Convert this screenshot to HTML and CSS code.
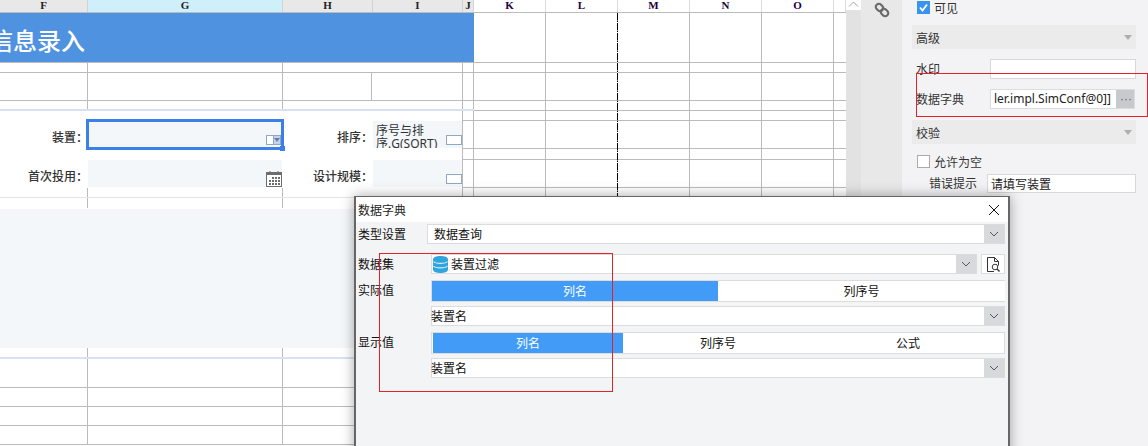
FILE: index.html
```html
<!DOCTYPE html>
<html lang="zh">
<head>
<meta charset="utf-8">
<title>数据字典</title>
<link rel="stylesheet" href="styles.css">
</head>
<body>
<div class="stage">
  <section class="sheet">
    <div class="col-head">
      <div class="ch w-f">F</div><div class="ch w-g active">G</div><div class="ch w-h">H</div><div class="ch w-i">I</div><div class="ch w-j">J</div>
      <div class="ch w-k plain">K</div><div class="ch w-k plain">L</div><div class="ch w-k plain">M</div><div class="ch w-k plain">N</div><div class="ch w-k plain">O</div><div class="ch w-p plain"></div>
    </div>
    <div class="panes">
      <div class="pane-left">
        <div class="banner"><span class="banner-text">信息录入</span></div>
        <div class="lrow h10"></div>
        <div class="lrow h28 with-i"></div>
        <div class="lrow h10 lavender"></div>
        <div class="form-block">
          <div class="form-main">
            <div class="form-row first">
              <div class="flabel">装置：</div>
              <div class="fcell">
                <div class="selection"><span class="handle"></span></div>
                <div class="combo-widget"><span class="cw-box"></span><span class="cw-arrow"></span></div>
              </div>
              <div class="flabel">排序：</div>
              <div class="fcell sort">序号与排<br>序.G(SORT)<span class="mini"></span></div>
            </div>
            <div class="form-row second">
              <div class="flabel">首次投用：</div>
              <div class="fcell">
                <svg class="calendar" width="16" height="16" viewBox="0 0 16 16">
                  <rect x="0.5" y="1.5" width="15" height="14" fill="#fff" stroke="#6c6c6c"/>
                  <rect x="0" y="1" width="16" height="3" fill="#6c6c6c"/>
                  <path d="M4 0v2M12 0v2" stroke="#6c6c6c"/>
                  <g fill="#6c6c6c"><rect x="6" y="6" width="2" height="2"/><rect x="9" y="6" width="2" height="2"/><rect x="12" y="6" width="2" height="2"/><rect x="3" y="9" width="2" height="2"/><rect x="6" y="9" width="2" height="2"/><rect x="9" y="9" width="2" height="2"/><rect x="12" y="9" width="2" height="2"/><rect x="3" y="12" width="2" height="2"/><rect x="6" y="12" width="2" height="2"/><rect x="9" y="12" width="2" height="2"/><rect x="12" y="12" width="2" height="2"/></g>
                </svg>
              </div>
              <div class="flabel">设计规模：</div>
              <div class="fcell sort"><span class="mini low"></span></div>
            </div>
          </div>
          <div class="j-strip"></div>
        </div>
        <div class="lrow h10 faint"></div>
        <div class="lrow h11 gap-white"></div>
        <div class="tinted"></div>
        <div class="lrow h11 lavender"></div>
        <div class="lrow h29"></div>
        <div class="lrow h19"></div>
        <div class="lrow h19"></div>
        <div class="lrow h19"></div>
      </div>
      <div class="pane-right">
        <div class="rrow r50"></div>
        <div class="rrow r10"></div>
        <div class="rrow r28"></div>
        <div class="rrow r10"></div>
        <div class="rrow r10"></div>
        <div class="rrow r28"></div>
        <div class="rrow r11"></div>
        <div class="rrow r28"></div>
        <div class="rrow r10"></div>
        <span class="page-break"></span>
      </div>
    </div>
  </section>

  <div class="scrollbar">
    <div class="scroll-up"><svg width="15" height="10" viewBox="0 0 15 10"><path d="M3 6.5l4.5-4.500 4.500 4.500" fill="none" stroke="#a8a8a8"/></svg></div>
    <div class="scroll-track"></div>
  </div>

  <div class="rail">
    <svg class="link-icon" width="16" height="16" viewBox="0 0 18 18">
      <g fill="none" stroke="#6a6a6a" stroke-width="2.400" transform="rotate(45 9 9)">
        <rect x="0.500" y="5.500" width="9" height="7" rx="3.500"/>
        <rect x="8.500" y="5.500" width="9" height="7" rx="3.500"/>
      </g>
    </svg>
  </div>

  <aside class="panel">
    <label class="check-row top"><span class="check on"><svg width="13" height="13" viewBox="0 0 13 13"><path d="M3 6.500l2.500 3 4.500-6" fill="none" stroke="#fff" stroke-width="1.800"/></svg></span>可见</label>
    <div class="section"><span>高级</span><i class="caret"></i></div>
    <div class="prop first-prop"><span class="prop-label">水印</span><div class="input"></div></div>
    <div class="prop second-prop"><span class="prop-label">数据字典</span><div class="input dict"><span class="dict-text">ler.impl.SimConf@0]]</span><span class="dots">···</span></div></div>
    <div class="section"><span>校验</span><i class="caret"></i></div>
    <label class="check-row allow"><span class="check"></span>允许为空</label>
    <div class="prop err"><span class="prop-label">错误提示</span><div class="input err-input">请填写装置</div></div>
  </aside>

  <div class="dialog">
    <header class="dlg-title"><span>数据字典</span>
      <svg width="12" height="12" viewBox="0 0 12 12"><path d="M1 1l10 10M11 1L1 11" stroke="#111" stroke-width="1"/></svg>
    </header>
    <div class="dlg-body">
      <div class="drow r-type">
        <span class="dlabel narrow">类型设置</span>
        <div class="dcombo pad"><span class="dtext">数据查询</span><span class="arrow"><svg width="10" height="6" viewBox="0 0 10 6"><path d="M1 1l4 4 4-4" fill="none" stroke="#555"/></svg></span></div>
      </div>
      <div class="drow r-set">
        <span class="dlabel">数据集</span>
        <div class="dcombo">
          <svg class="db" width="15" height="17" viewBox="0 0 15 17">
            <path d="M0 3.500C0 1 3.500 0 7.500 0S15 1 15 3.500v10c0 2.500-3.500 3.500-7.500 3.500S0 16 0 13.500z" fill="#2fa5e0"/>
            <path d="M0.500 5.500c2 2.500 12 2.500 14 0M0.500 10c2 2.500 12 2.500 14 0" fill="none" stroke="#d6effa" stroke-width="1.100"/>
          </svg>
          <span class="dtext tight">装置过滤</span><span class="arrow"><svg width="10" height="6" viewBox="0 0 10 6"><path d="M1 1l4 4 4-4" fill="none" stroke="#555"/></svg></span></div>
        <div class="doc-btn">
          <svg width="13" height="15" viewBox="0 0 13 15"><path d="M7 14.500H0.500V0.500h7l4 4v4M7.500 0.500v4h4" fill="none" stroke="#333"/><circle cx="8" cy="10" r="2.800" fill="#fff" stroke="#333"/><path d="M10 12l2.500 2.500" stroke="#333" stroke-width="1.400"/></svg>
        </div>
      </div>
      <div class="drow r-seg1">
        <span class="dlabel">实际值</span>
        <div class="seg two"><span class="seg-item on">列名</span><span class="seg-item">列序号</span></div>
      </div>
      <div class="drow r-sub">
        <span class="dlabel"></span>
        <div class="dcombo"><span class="dtext flush">装置名</span><span class="arrow"><svg width="10" height="6" viewBox="0 0 10 6"><path d="M1 1l4 4 4-4" fill="none" stroke="#555"/></svg></span></div>
      </div>
      <div class="drow r-seg1">
        <span class="dlabel">显示值</span>
        <div class="seg three"><span class="seg-item on">列名</span><span class="seg-item">列序号</span><span class="seg-item">公式</span></div>
      </div>
      <div class="drow r-sub">
        <span class="dlabel"></span>
        <div class="dcombo"><span class="dtext flush">装置名</span><span class="arrow"><svg width="10" height="6" viewBox="0 0 10 6"><path d="M1 1l4 4 4-4" fill="none" stroke="#555"/></svg></span></div>
      </div>
    </div>
  </div>

  <div class="note note-panel"></div>
  <div class="note note-dialog"></div>
</div>
</body>
</html>
```
FILE: styles.css
```css
* { box-sizing: border-box; }
html, body { margin: 0; padding: 0; }
body {
  width: 1148px;
  height: 446px;
  overflow: hidden;
  background: #f3f3f5;
  font-family: "Noto Sans CJK SC", "Liberation Sans", sans-serif;
  font-size: 12px;
  color: #222;
}
.stage { position: relative; display: flex; width: 1148px; height: 446px; overflow: hidden; }

/* sheet */
.sheet { width: 846px; height: 446px; flex: none; background: #fff; overflow: hidden; }
.col-head { display: flex; height: 13px; border-bottom: 1px solid #bbb; background: #fff; }
.ch {
  height: 12px; text-align: center; flex: none;
  background: #e8e8e8; border-right: 1px solid #d2d2d2;
  font: bold 11px/11px "Liberation Serif", serif; color: #222;
}
.ch.active { background: #cfeffa; }
.ch.plain { background: #fff; border-right-color: #ddd; color: #200040; }
.w-f { width: 88px; } .w-g { width: 195px; } .w-h { width: 90px; } .w-i { width: 90px; }
.w-j { width: 11px; } .w-k { width: 72px; } .w-p { width: 12px; }

.panes { display: flex; height: 433px; }
.pane-left { width: 474px; flex: none; }
.banner {
  height: 50px; background: #4f92e0; border-bottom: 1px solid #bbb; overflow: hidden;
  display: flex; align-items: center; padding-top: 3px;
}
.banner-text { color: #fff; font-size: 24px; font-weight: 500; margin-left: -11px; white-space: nowrap; }

.lrow {
  border-bottom: 1px solid #bbb;
  background:
    linear-gradient(#bbb, #bbb) 87px 0 / 1px 100% no-repeat,
    linear-gradient(#bbb, #bbb) 282px 0 / 1px 100% no-repeat,
    linear-gradient(#bbb, #bbb) 462px 0 / 1px 100% no-repeat,
    linear-gradient(#bbb, #bbb) 473px 0 / 1px 100% no-repeat;
}
.lrow.with-i {
  background:
    linear-gradient(#bbb, #bbb) 87px 0 / 1px 100% no-repeat,
    linear-gradient(#bbb, #bbb) 282px 0 / 1px 100% no-repeat,
    linear-gradient(#bbb, #bbb) 371px 0 / 1px 100% no-repeat,
    linear-gradient(#bbb, #bbb) 462px 0 / 1px 100% no-repeat,
    linear-gradient(#bbb, #bbb) 473px 0 / 1px 100% no-repeat;
}
.h10 { height: 10px; } .h11 { height: 11px; } .h19 { height: 19px; } .h28 { height: 28px; } .h29 { height: 29px; }
.lavender { border-bottom: 2px solid #d9e0f1; }
.faint { border-bottom-color: #e4e4e4; }
.gap-white { border-bottom-color: #fff; }
.tinted { height: 139px; background: #f3f7fa; }

.form-block { display: flex; height: 77px; }
.form-main { width: 462px; flex: none; background: #fff; }
.j-strip {
  width: 12px; flex: none;
  background:
    linear-gradient(#bbb, #bbb) 0 9px / 100% 1px no-repeat,
    linear-gradient(#bbb, #bbb) 0 37px / 100% 1px no-repeat,
    linear-gradient(#bbb, #bbb) 0 48px / 100% 1px no-repeat,
    linear-gradient(#bbb, #bbb) 0 76px / 100% 1px no-repeat,
    linear-gradient(#bbb, #bbb) 0 0 / 1px 100% no-repeat,
    linear-gradient(#bbb, #bbb) 11px 0 / 1px 100% no-repeat;
}
.form-row { display: grid; grid-template-columns: 88px 194px 91px 89px; height: 27px; }
.form-row.first { margin-top: 10px; }
.form-row.second { margin-top: 12px; }
.flabel { text-align: right; white-space: nowrap; line-height: 32px; color: #333; font-weight: 500; }
.fcell { position: relative; background: #f3f7fa; height: 27px; }
.fcell.sort {
  padding: 3px 0 0 3px; font-size: 12px; line-height: 13px; color: #333; white-space: nowrap; overflow: hidden;
  font-family: "Noto Sans", "Noto Sans CJK SC", sans-serif;
}
.selection { position: absolute; inset: -2px; border: 3px solid #3a80e8; }
.handle { position: absolute; right: -4px; bottom: -4px; width: 5px; height: 5px; background: #3a80e8; }
.combo-widget { position: absolute; right: 1px; bottom: 3px; display: flex; height: 10px; }
.cw-box { width: 7px; background: #fff; border: 1px solid #8fa8c8; border-right: 0; }
.cw-arrow { position: relative; width: 8px; background: #c5d3e8; border: 1px solid #8fa8c8; }
.cw-arrow::after {
  content: ""; position: absolute; left: 0; top: 2px;
  border: 3px solid transparent; border-top: 4px solid #6a7fa8; border-bottom: 0;
}
.mini { position: absolute; right: 0; top: 14px; width: 16px; height: 10px; background: #fff; border: 1px solid #8fa8c8; }
.mini.low { top: 14px; }
.calendar { position: absolute; right: 0; top: 11px; }

.pane-right {
  position: relative; flex: 1;
  background:
    linear-gradient(#bbb, #bbb) 71px 0 / 1px 100% no-repeat,
    linear-gradient(#bbb, #bbb) 215px 0 / 1px 100% no-repeat,
    linear-gradient(#bbb, #bbb) 287px 0 / 1px 100% no-repeat,
    linear-gradient(#bbb, #bbb) 359px 0 / 1px 100% no-repeat;
}
.rrow { border-bottom: 1px solid #bbb; }
.r50 { height: 50px; }
.r10 { height: 10px; } .r11 { height: 11px; } .r28 { height: 28px; }
.page-break {
  position: absolute; left: 143px; top: 0; bottom: 0; width: 1px;
  background: repeating-linear-gradient(#000 0 7px, #888 7px 8px, #000 8px 9px, #fff 9px 10px);
}

/* scrollbar and rail */
.scrollbar { width: 15px; flex: none; background: #e2e2e2; }
.scroll-up { height: 10px; background: #fff; display: flex; }
.rail { width: 41px; flex: none; background: #e8e8e8; padding: 2px 0 0 13px; }
.link-icon { display: block; }

/* properties panel */
.panel { width: 246px; flex: none; background: #f3f3f5; padding: 1px 12px 0 10px; }
.check-row { display: flex; align-items: center; gap: 4px; height: 13px; padding-left: 5px; line-height: 13px; color: #333; }
.check { width: 13px; height: 13px; flex: none; background: #fff; border: 1px solid #aaa; }
.check.on { background: #3a94ee; border: 0; display: flex; }
.section {
  display: flex; align-items: center; justify-content: space-between;
  height: 24px; padding: 0 4px; background: #ebebeb; margin-top: 11px; color: #333;
}
.caret { width: 0; height: 0; border: 4.500px solid transparent; border-top: 5px solid #aeaeb0; border-bottom: 0; }
.prop { display: flex; align-items: center; }
.prop-label { width: 78px; flex: none; padding-left: 4px; color: #333; white-space: nowrap; position: relative; top: -1px; }
.input { background: #fff; border: 1px solid #d8d8d8; height: 20px; flex: none; width: 146px; }
.first-prop { margin-top: 10px; }
.second-prop { margin-top: 10px; margin-bottom: 10px; }
.dict { display: flex; width: 145px; overflow: hidden; border-color: #dcdcdc; }
.dict-text { width: 125px; flex: none; padding-left: 3px; line-height: 18px; white-space: nowrap; overflow: hidden; color: #222; font-family: "Noto Sans", sans-serif; }
.dots { width: 20px; flex: none; background: #c8c9cc; text-align: center; line-height: 18px; color: #666; font-family: "Liberation Sans", sans-serif; }
.allow { margin-top: 11px; }
.err { margin-top: 6px; }
.err .prop-label { width: 75px; padding-left: 17px; }
.err-input { width: 149px; height: 19px; line-height: 17px; padding-left: 3px; color: #222; }

/* dialog */
.dialog {
  position: absolute; left: 354px; top: 196px; width: 656px; height: 270px;
  background: #f3f4f6; border: 1px solid #666; border-width: 1px 2px 0 2px;
  box-shadow: 0 0 12px rgba(0, 0, 0, .35);
}
.dlg-title {
  display: flex; align-items: center; justify-content: space-between;
  height: 25px; background: #fff; padding: 0 8px 0 2px; color: #222;
}
.dlg-body { padding: 2px 3px 0 2px; color: #111; }
.drow { display: flex; align-items: stretch; }
.r-type { height: 20px; }
.r-set { height: 20px; margin-top: 10px; }
.r-seg1 { height: 22px; margin-top: 6px; }
.r-sub { height: 20px; margin-top: 4px; }
.dlabel { width: 73px; flex: none; line-height: 20px; white-space: nowrap; }
.dlabel.narrow { width: 69px; }
.dcombo {
  flex: 1; display: flex; align-items: center; background: #fff;
  border: 1px solid #dcdcdc; position: relative; min-width: 0;
}
.dtext { flex: 1; line-height: 18px; white-space: nowrap; }
.dcombo.pad .dtext { padding-left: 6px; }
.dtext.tight { padding-left: 3px; }
.dtext.flush { padding-left: 0; margin-left: -1px; }
.db { margin-left: 1px; flex: none; }
.arrow {
  width: 20px; height: 100%; flex: none; background: #d8d9dc;
  display: flex; align-items: center; justify-content: center;
}
.doc-btn {
  width: 24px; flex: none; margin-left: 4px; background: #fff; border: 1px solid #dcdcdc;
  display: flex; align-items: center; justify-content: center;
}
.seg { flex: 1; display: grid; background: #fff; border: 1px solid #dcdcdc; text-align: center; line-height: 20px; }
.seg.two { grid-template-columns: 286px 1fr; border-width: 1px 0 1px 1px; }
.seg.three { grid-template-columns: 190px 190px 1fr; padding: 0 1px; }
.seg-item.on { background: #429cf7; color: #fff; }

/* red annotation frames */
.note { position: absolute; border: 1px solid #e8202a; pointer-events: none; }
.note-panel { left: 916px; top: 73px; width: 232px; height: 44px; }
.note-dialog { left: 379px; top: 253px; width: 234px; height: 139px; }
```
